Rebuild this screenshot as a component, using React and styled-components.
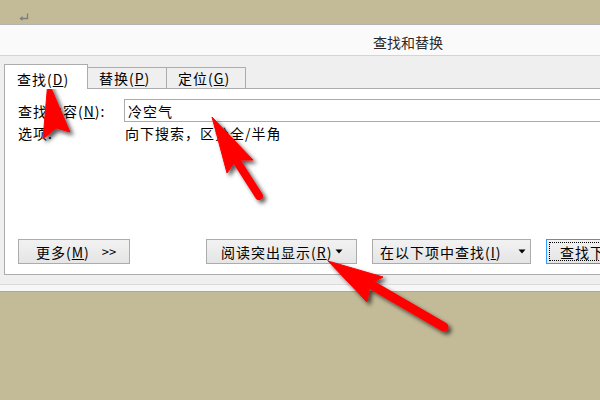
import React from 'react';
import styled, { createGlobalStyle } from 'styled-components';

const Global = createGlobalStyle`
  html, body { margin: 0; padding: 0; background: #c3ba97; overflow: hidden; }
  body { width: 600px; height: 400px; font-family: "Noto Sans CJK SC", "Noto Sans", sans-serif; }
`;

const Page = styled.div`
  position: relative;
  width: 600px;
  height: 400px;
  overflow: hidden;
  background: #c3ba97;
`;

const DocStrip = styled.div`
  height: 24px;
  padding-left: 19px;
  box-sizing: border-box;
  display: flex;
  align-items: flex-start;
  padding-top: 13px;
`;

const Dialog = styled.div`
  border-top: 1px solid #b2b2b2;
  background: #efefef;
`;

const TitleBar = styled.div`
  height: 30px;
  box-sizing: border-box;
  background: #fafafa;
  border-bottom: 1px solid #d4d4d4;
  padding-left: 373px;
  padding-top: 4px;
  display: flex;
  align-items: center;
  font-size: 14px;
  color: #2a2a2a;
  height: 31px;
`;

const Body = styled.div`
  background: #efefef;
  padding-top: 8px;
  padding-bottom: 9px;
`;

const TabRow = styled.div`
  display: flex;
  align-items: flex-end;
  padding-left: 4px;
  height: 24px;
`;

const Tab = styled.div`
  box-sizing: border-box;
  width: ${p => p.$w}px;
  height: ${p => (p.$active ? 25 : 21)}px;
  margin-bottom: ${p => (p.$active ? -1 : 0)}px;
  position: relative;
  z-index: ${p => (p.$active ? 2 : 1)};
  background: ${p => (p.$active ? '#ffffff' : '#efefef')};
  border-top: 1px solid #acacac;
  border-right: 1px solid #acacac;
  border-left: ${p => (p.$active ? '1px solid #acacac' : 'none')};
  padding-left: ${p => (p.$active ? 12 : 11)}px;
  padding-top: ${p => (p.$active ? 3 : 0)}px;
  display: flex;
  align-items: center;
  font-size: 14px;
  letter-spacing: 1px;
  color: #000;
`;

const Panel = styled.div`
  margin-left: 4px;
  height: 187px;
  box-sizing: border-box;
  border: 1px solid #acacac;
  border-right: none;
  background: #ffffff;
  display: flex;
  flex-direction: column;
  padding: 10px 0 10px 13px;
`;

const FieldRow = styled.div`
  display: flex;
  align-items: center;
  height: ${p => p.$h}px;
  margin-top: ${p => p.$mt || 0}px;
  font-size: 14px;
  letter-spacing: 1px;
  color: #000;
`;

const Label = styled.div`
  width: 106px;
  flex: none;
`;

const TextInput = styled.div`
  flex: 1;
  height: 23px;
  box-sizing: border-box;
  border: 1px solid #ababab;
  margin-right: -30px;
  display: flex;
  align-items: center;
  padding-left: 3px;
`;

const OptionText = styled.div`
  padding-left: 1px;
`;

const ButtonRow = styled.div`
  margin-top: auto;
  display: flex;
  align-items: center;
  height: 25px;
`;

const Button = styled.div`
  flex: none;
  box-sizing: border-box;
  width: ${p => p.$w}px;
  height: 25px;
  margin-left: ${p => p.$ml || 0}px;
  border: 1px solid ${p => (p.$focus ? '#3399ff' : '#acacac')};
  background: linear-gradient(#f2f2f2, #e5e5e5);
  display: flex;
  align-items: center;
  padding-left: ${p => p.$pl}px;
  font-size: 14px;
  letter-spacing: 1px;
  color: #000;
  position: relative;
  white-space: nowrap;
`;

const FocusRing = styled.div`
  position: absolute;
  inset: 2px;
  border: 1px dotted #000;
  pointer-events: none;
`;

const Chevrons = styled.span`
  margin-left: ${p => p.$ml}px;
  font-size: 13px;
  letter-spacing: 0;
`;

const Caret = styled.svg`
  margin-left: ${p => p.$ml}px;
  flex: none;
`;

const Footer = styled.div`
  height: 8px;
  box-sizing: border-box;
  background: #f7f7f7;
  border-top: 1px solid #dadada;
  border-bottom: 1px solid #a8a8a8;
`;

const Overlay = styled.svg`
  position: absolute;
  left: 0;
  top: 0;
  pointer-events: none;
`;

const DownCaret = ({ ml }) => (
  <Caret $ml={ml} width="8" height="5" viewBox="0 0 8 5">
    <path d="M0.5 0.5 H7.5 L4 4.5 Z" fill="#000" />
  </Caret>
);

export default function App() {
  return (
    <Page>
      <Global />
      <DocStrip>
        <svg width="10" height="8" viewBox="0 0 10 8">
          <path d="M8.5 0.5 V5.5 H2" stroke="#7d7d7d" strokeWidth="1.3" fill="none" />
          <path d="M0.5 5.5 L3.5 3 V8 Z" fill="#7d7d7d" />
        </svg>
      </DocStrip>
      <Dialog>
        <TitleBar>查找和替换</TitleBar>
        <Body>
          <TabRow>
            <Tab $active $w={84}>查找(<u>D</u>)</Tab>
            <Tab $w={79}>替换(<u>P</u>)</Tab>
            <Tab $w={79}>定位(<u>G</u>)</Tab>
          </TabRow>
          <Panel>
            <FieldRow $h={23}>
              <Label>查找内容(<u>N</u>):</Label>
              <TextInput>冷空气</TextInput>
            </FieldRow>
            <FieldRow $h={18} $mt={2}>
              <Label>选项:</Label>
              <OptionText>向下搜索，区分全/半角</OptionText>
            </FieldRow>
            <ButtonRow>
              <Button $w={112} $pl={17}>
                更多(<u>M</u>)<Chevrons $ml={12}>&gt;&gt;</Chevrons>
              </Button>
              <Button $w={151} $pl={14} $ml={76}>
                阅读突出显示(<u>R</u>)<DownCaret ml={3} />
              </Button>
              <Button $w={159} $pl={7} $ml={15}>
                在以下项中查找(<u>I</u>)<DownCaret ml={16} />
              </Button>
              <Button $w={110} $pl={13} $ml={15} $focus>
                查找下一处
                <FocusRing />
              </Button>
            </ButtonRow>
          </Panel>
        </Body>
        <Footer />
      </Dialog>
      <Overlay width="600" height="400" viewBox="0 0 600 400">
        <defs>
          <filter id="sh" x="-30%" y="-30%" width="160%" height="160%">
            <feDropShadow dx="3" dy="3" stdDeviation="2.2" floodColor="#000" floodOpacity="0.65" />
          </filter>
        </defs>
        <g fill="#ff0000" stroke="#ff0000" filter="url(#sh)">
          <polygon points="48,81 70,132 56,128 43,139" strokeWidth="1" strokeLinejoin="round" />
          <line x1="236" y1="160" x2="259" y2="196" strokeWidth="8" strokeLinecap="round" />
          <polygon points="212,117 253,160 236,160 227,173" strokeWidth="1" strokeLinejoin="round" />
          <line x1="370" y1="284" x2="444" y2="327" strokeWidth="9" strokeLinecap="round" />
          <polygon points="328,261 383,277 370,284 367,302" strokeWidth="1" strokeLinejoin="round" />
        </g>
      </Overlay>
    </Page>
  );
}
